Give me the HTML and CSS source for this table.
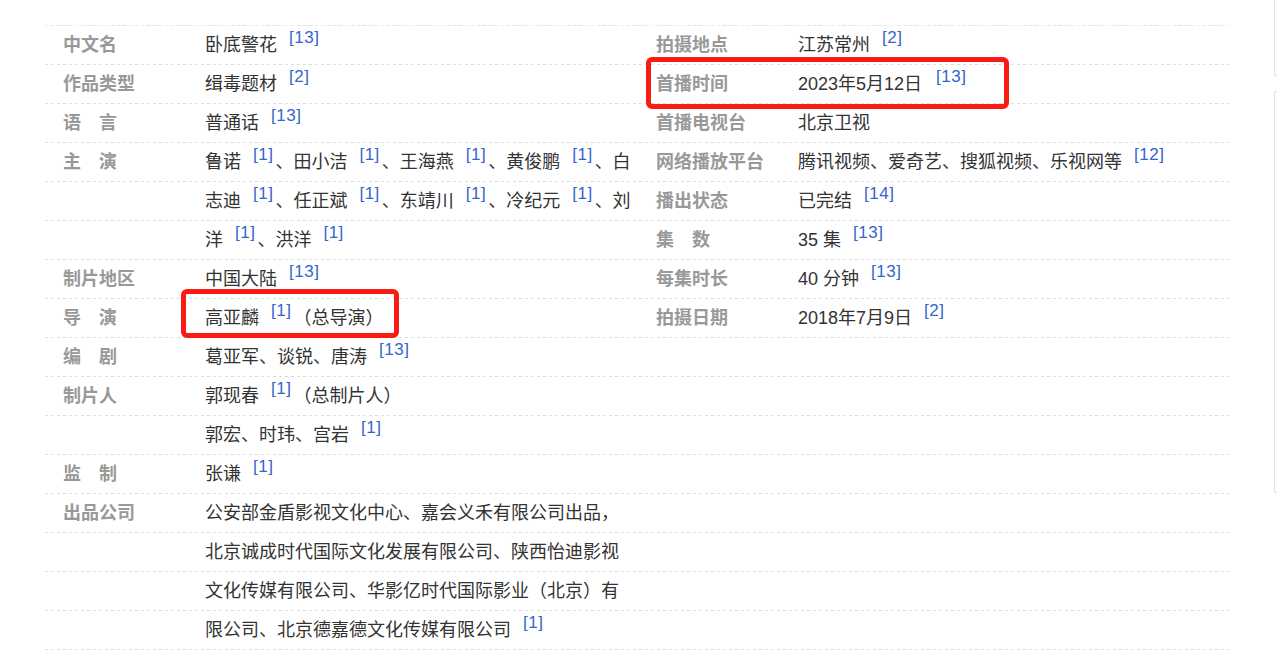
FILE: index.html
```html
<!DOCTYPE html>
<html lang="zh-CN">
<head>
<meta charset="utf-8">
<title>卧底警花</title>
<link rel="stylesheet" href="styles.css">
</head>
<body>
<div class="page">
  <div class="info">
    <dl class="col">
      <div class="row"><dt>中文名</dt><dd>卧底警花<sup>[13]</sup></dd></div>
      <div class="row"><dt>作品类型</dt><dd>缉毒题材<sup>[2]</sup></dd></div>
      <div class="row"><dt>语　言</dt><dd>普通话<sup>[13]</sup></dd></div>
      <div class="row"><dt>主　演</dt><dd>鲁诺<sup>[1]</sup>、田小洁<sup>[1]</sup>、王海燕<sup>[1]</sup>、黄俊鹏<sup>[1]</sup>、白志迪<sup>[1]</sup>、任正斌<sup>[1]</sup>、东靖川<sup>[1]</sup>、冷纪元<sup>[1]</sup>、刘洋<sup>[1]</sup>、洪洋<sup>[1]</sup></dd></div>
      <div class="row"><dt>制片地区</dt><dd>中国大陆<sup>[13]</sup></dd></div>
      <div class="row"><dt>导　演</dt><dd>高亚麟<sup>[1]</sup>（总导演）</dd></div>
      <div class="row"><dt>编　剧</dt><dd>葛亚军、谈锐、唐涛<sup>[13]</sup></dd></div>
      <div class="row"><dt>制片人</dt><dd>郭现春<sup>[1]</sup>（总制片人）<br>郭宏、时玮、宫岩<sup>[1]</sup></dd></div>
      <div class="row"><dt>监　制</dt><dd>张谦<sup>[1]</sup></dd></div>
      <div class="row"><dt>出品公司</dt><dd>公安部金盾影视文化中心、嘉会义禾有限公司出品，北京诚成时代国际文化发展有限公司、陕西怡迪影视文化传媒有限公司、华影亿时代国际影业（北京）有限公司、北京德嘉德文化传媒有限公司<sup>[1]</sup></dd></div>
    </dl>
    <dl class="col col-right">
      <div class="row"><dt>拍摄地点</dt><dd>江苏常州<sup>[2]</sup></dd></div>
      <div class="row"><dt>首播时间</dt><dd>2023年5月12日<sup class="sup-wide">[13]</sup></dd></div>
      <div class="row"><dt>首播电视台</dt><dd>北京卫视</dd></div>
      <div class="row"><dt>网络播放平台</dt><dd>腾讯视频、爱奇艺、搜狐视频、乐视网等<sup>[12]</sup></dd></div>
      <div class="row"><dt>播出状态</dt><dd>已完结<sup>[14]</sup></dd></div>
      <div class="row"><dt>集　数</dt><dd>35 集<sup>[13]</sup></dd></div>
      <div class="row"><dt>每集时长</dt><dd>40 分钟<sup>[13]</sup></dd></div>
      <div class="row"><dt>拍摄日期</dt><dd>2018年7月9日<sup>[2]</sup></dd></div>
    </dl>
  </div>
  <aside class="side">
    <div class="side-box side-box-top"></div>
    <div class="side-box side-box-main"></div>
  </aside>
  <div class="mark mark-date"></div>
  <div class="mark mark-director"></div>
</div>
</body>
</html>
```
FILE: styles.css
```css
html, body {
  margin: 0;
  padding: 0;
  background: #fff;
}

body {
  font-family: "Liberation Sans", "Noto Sans CJK SC", sans-serif;
  overflow: hidden;
}

.page {
  position: relative;
  display: flex;
  align-items: flex-start;
  width: 1277px;
  height: 661px;
}

.info {
  display: flex;
  flex: none;
  width: 1185px;
  margin: 25px 0 0 45px;
  border-top: 1px dashed #efefef;
  background-color: #fff;
  background-image:
    linear-gradient(#fff 0 38px, transparent 38px),
    linear-gradient(to right, #dddddd 0 3px, transparent 3px);
  background-size: 100% 39px, 6px 100%;
  background-repeat: repeat, repeat;
  min-height: 624px;
}

.col {
  margin: 0;
  width: 593px;
  flex: none;
  padding-left: 18px;
  box-sizing: border-box;
}

.col-right {
  width: 592px;
}

.row {
  display: flex;
}

dt {
  width: 142px;
  flex: none;
  margin: 0;
  font-size: 18px;
  line-height: 39px;
  font-weight: bold;
  color: #999;
  white-space: nowrap;
}

dd {
  width: 428px;
  flex: none;
  margin: 0;
  font-size: 18px;
  line-height: 39px;
  color: #333;
}

sup {
  font-size: 17px;
  line-height: 0;
  vertical-align: 8px;
  color: #3366cc;
  margin-left: 12px;
  margin-right: 2px;
  letter-spacing: 0.5px;
}

.sup-wide {
  margin-left: 14px;
}

.side {
  flex: none;
  margin-left: 44px;
  width: 10px;
  display: flex;
  flex-direction: column;
}

.side-box {
  border-left: 1px solid #e3e3e3;
  box-sizing: border-box;
}

.side-box-top {
  height: 76px;
  border-bottom: 1px solid #e3e3e3;
}

.side-box-main {
  margin-top: 15px;
  height: 402px;
  border-top: 1px solid #e3e3e3;
  border-bottom: 1px solid #e3e3e3;
}

.mark {
  position: absolute;
  border: 5px solid #fa1c14;
  border-radius: 6px;
  box-sizing: border-box;
}

.mark-date {
  left: 646px;
  top: 57px;
  width: 363px;
  height: 52px;
}

.mark-director {
  left: 181px;
  top: 289px;
  width: 218px;
  height: 49px;
}
```
